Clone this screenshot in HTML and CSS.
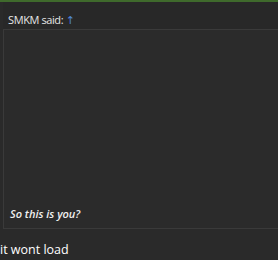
FILE: index.html
```html
<!DOCTYPE html>
<html>
<head>
<meta charset="utf-8">
<link rel="stylesheet" href="styles.css">
</head>
<body>
<div class="topline"></div>
<div class="quote">
  <div class="quote-head">SMKM said: <span class="up">↑</span></div>
  <div class="quote-body">
    <div class="quote-text">So this is you?</div>
  </div>
</div>
<div class="reply">it wont load</div>
</body>
</html>
```
FILE: styles.css
```css
html, body {
  margin: 0;
  padding: 0;
}
body {
  width: 278px;
  height: 260px;
  background: #2a2a2a;
  font-family: "Open Sans", "DejaVu Sans", sans-serif;
  overflow: hidden;
}
.topline {
  height: 2px;
  background: #3f6a2c;
}
.quote {
  margin-left: 3px;
}
.quote-head {
  height: 28px;
  box-sizing: border-box;
  padding: 11px 0 0 5px;
  font-size: 11px;
  line-height: 14px;
  color: #e6e6e6;
  letter-spacing: -0.4px;
  background: #282828;
  border-bottom: 1px solid #3a3a3a;
}
.up {
  color: #4f86d6;
  letter-spacing: 0;
}
.quote-body {
  height: 199px;
  box-sizing: border-box;
  border-left: 1px solid #3a3a3a;
  border-bottom: 1px solid #3a3a3a;
  background: #2b2b2b;
  display: flex;
  align-items: flex-end;
  padding: 0 0 7px 6px;
}
.quote-text {
  font-size: 11px;
  line-height: 14px;
  font-style: italic;
  font-weight: 600;
  color: #f0f0f0;
}
.reply {
  margin-top: 13px;
  font-size: 12.5px;
  line-height: 16px;
  font-weight: 500;
  color: #ffffff;
  letter-spacing: 0;
}
```
